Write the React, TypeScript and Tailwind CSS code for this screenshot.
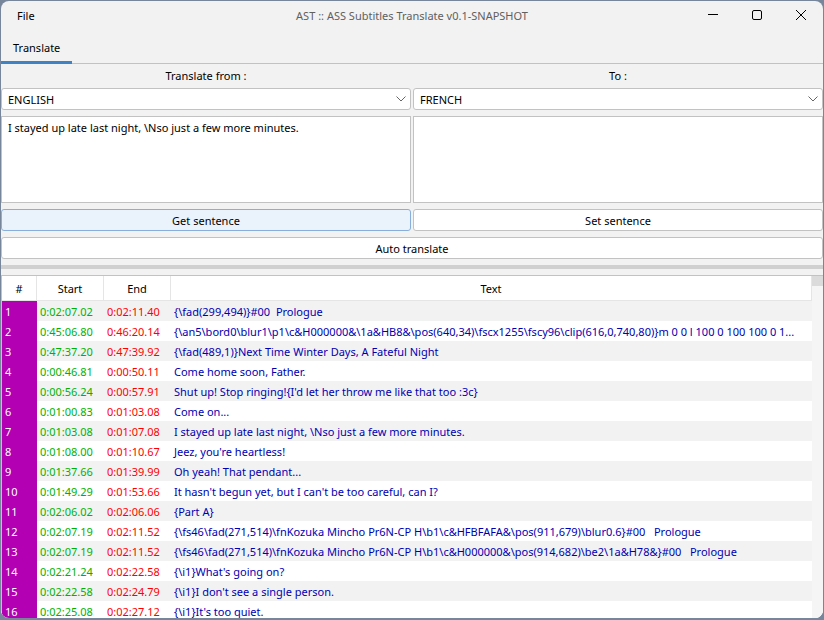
import { useState } from "react";

type Subtitle = { start: string; end: string; text: string };

const subtitles: Subtitle[] = [
  { start: "0:02:07.02", end: "0:02:11.40", text: "{\\fad(299,494)}#00  Prologue" },
  {
    start: "0:45:06.80",
    end: "0:46:20.14",
    text: "{\\an5\\bord0\\blur1\\p1\\c&H000000&\\1a&HB8&\\pos(640,34)\\fscx1255\\fscy96\\clip(616,0,740,80)}m 0 0 l 100 0 100 100 0 1...",
  },
  { start: "0:47:37.20", end: "0:47:39.92", text: "{\\fad(489,1)}Next Time Winter Days, A Fateful Night" },
  { start: "0:00:46.81", end: "0:00:50.11", text: "Come home soon, Father." },
  { start: "0:00:56.24", end: "0:00:57.91", text: "Shut up! Stop ringing!{I'd let her throw me like that too :3c}" },
  { start: "0:01:00.83", end: "0:01:03.08", text: "Come on..." },
  { start: "0:01:03.08", end: "0:01:07.08", text: "I stayed up late last night, \\Nso just a few more minutes." },
  { start: "0:01:08.00", end: "0:01:10.67", text: "Jeez, you're heartless!" },
  { start: "0:01:37.66", end: "0:01:39.99", text: "Oh yeah! That pendant..." },
  { start: "0:01:49.29", end: "0:01:53.66", text: "It hasn't begun yet, but I can't be too careful, can I?" },
  { start: "0:02:06.02", end: "0:02:06.06", text: "{Part A}" },
  {
    start: "0:02:07.19",
    end: "0:02:11.52",
    text: "{\\fs46\\fad(271,514)\\fnKozuka Mincho Pr6N-CP H\\b1\\c&HFBFAFA&\\pos(911,679)\\blur0.6}#00   Prologue",
  },
  {
    start: "0:02:07.19",
    end: "0:02:11.52",
    text: "{\\fs46\\fad(271,514)\\fnKozuka Mincho Pr6N-CP H\\b1\\c&H000000&\\pos(914,682)\\be2\\1a&H78&}#00   Prologue",
  },
  { start: "0:02:21.24", end: "0:02:22.58", text: "{\\i1}What's going on?" },
  { start: "0:02:22.58", end: "0:02:24.79", text: "{\\i1}I don't see a single person." },
  { start: "0:02:25.08", end: "0:02:27.12", text: "{\\i1}It's too quiet." },
];

function TitleBar() {
  return (
    <header className="grid h-[30px] shrink-0 grid-cols-[1fr_auto_1fr] items-center">
      <div>
        <button type="button" className="px-4">File</button>
      </div>
      <h1 className="text-[#606060]">AST :: ASS Subtitles Translate v0.1-SNAPSHOT</h1>
      <div className="flex justify-end self-start">
        <button type="button" aria-label="Minimize" className="flex h-7 w-11 items-center justify-center">
          <svg width="10" height="10" viewBox="0 0 10 10" stroke="#000" fill="none">
            <path d="M0 4.500h10" />
          </svg>
        </button>
        <button type="button" aria-label="Maximize" className="flex h-7 w-11 items-center justify-center">
          <svg width="10" height="10" viewBox="0 0 10 10" stroke="#000" fill="none">
            <rect x="0.5" y="0.5" width="9" height="9" rx="1.5" />
          </svg>
        </button>
        <button type="button" aria-label="Close" className="flex h-7 w-11 items-center justify-center">
          <svg width="10" height="10" viewBox="0 0 10 10" stroke="#000" fill="none" className="overflow-visible">
            <path d="M0 0l10 10M10 0L0 10" />
          </svg>
        </button>
      </div>
    </header>
  );
}

type PaneProps = {
  id: string;
  label: string;
  language: string;
  sentence: string;
  action: string;
  focused?: boolean;
  onChange: (value: string) => void;
  onAction: () => void;
};

function Pane({ id, label, language, sentence, action, focused, onChange, onAction }: PaneProps) {
  return (
    <section className="flex min-w-0 flex-col">
      <label htmlFor={id} className="flex h-6 items-center justify-center">{label}</label>
      <div className="grid items-center">
        <select
          id={id}
          defaultValue={language}
          className="col-start-1 row-start-1 h-[22px] w-full appearance-none rounded-[3px] border border-[#c2c2c2] bg-white px-1.5 pt-0.5"
        >
          <option>ENGLISH</option>
          <option>FRENCH</option>
        </select>
        <svg
          width="10"
          height="6"
          viewBox="0 0 10 6"
          fill="none"
          stroke="#666"
          className="pointer-events-none col-start-1 row-start-1 mr-[5px] justify-self-end"
        >
          <path d="M0.5 0.5L5 5L9.500 0.5" />
        </svg>
      </div>
      <textarea
        aria-label={`${label} sentence`}
        value={sentence}
        onChange={(e) => onChange(e.target.value)}
        className="mt-1.5 block h-[87px] w-full resize-none border border-[#c2c2c2] bg-white px-1.5 py-[3px] outline-none"
      />
      <button
        type="button"
        onClick={onAction}
        className={
          focused
            ? "mt-1.5 h-[22px] rounded-[3px] border border-[#87afda] bg-[#eaf2fc] pt-0.5"
            : "mt-1.5 h-[22px] rounded-[3px] border border-[#c2c2c2] bg-white pt-0.5"
        }
      >
        {action}
      </button>
    </section>
  );
}

function SubtitleTable() {
  return (
    <div className="mt-1.5 flex min-h-0 flex-1 overflow-hidden border-t border-l border-[#c2c2c2] bg-white">
      <div className="min-w-0 flex-1">
        <table className="w-full table-fixed border-separate border-spacing-0">
          <colgroup>
            <col className="w-[35px]" />
            <col className="w-[67px]" />
            <col className="w-[67px]" />
            <col />
          </colgroup>
          <thead>
            <tr className="h-[25px]">
              <th className="border-r border-b border-[#e5e5e5] p-0 pt-0.5 font-normal">#</th>
              <th className="border-r border-b border-[#e5e5e5] p-0 pt-0.5 font-normal">Start</th>
              <th className="border-r border-b border-[#e5e5e5] p-0 pt-0.5 font-normal">End</th>
              <th className="border-r border-b border-[#e5e5e5] p-0 pt-0.5 font-normal">Text</th>
            </tr>
          </thead>
          <tbody>
            {subtitles.map((s, i) => (
              <tr key={i} className="h-5 odd:bg-[#f2f2f2]">
                <td className="bg-[#b200b2] p-0 pt-0.5 pl-[3px] text-white">{i + 1}</td>
                <td className="p-0 pt-0.5 pl-[3px] text-[#00b200]">{s.start}</td>
                <td className="p-0 pt-0.5 pl-[3px] text-[#ff0000]">{s.end}</td>
                <td className="overflow-hidden p-0 px-[3px] pt-0.5 text-ellipsis whitespace-pre text-[#0000b2]">{s.text}</td>
              </tr>
            ))}
          </tbody>
        </table>
      </div>
      <div className="w-[11px] shrink-0 bg-[#f5f5f5]">
        <div className="h-2.5 bg-[#dbdbdb]" />
      </div>
    </div>
  );
}

export default function App() {
  const [source, setSource] = useState("I stayed up late last night, \\Nso just a few more minutes.");
  const [target, setTarget] = useState("");

  return (
    <div className="h-screen bg-[#77869a] px-px pt-px pb-0.5 font-['Noto_Sans','Open_Sans',sans-serif] text-[11px] leading-4 text-black">
      <div className="flex h-full flex-col overflow-hidden rounded-lg bg-[#f2f2f2]">
        <TitleBar />
        <nav role="tablist" className="flex h-[33px] shrink-0 border-b border-[#c2c2c2]">
          <button type="button" role="tab" aria-selected="true" className="-mb-px h-[33px] border-b-3 border-[#3f83c5] px-3 pt-1">
            Translate
          </button>
        </nav>
        <main className="flex min-h-0 flex-1 flex-col">
          <div className="grid shrink-0 grid-cols-2 gap-0.5">
            <Pane
              id="from"
              label="Translate from :"
              language="ENGLISH"
              sentence={source}
              action="Get sentence"
              focused
              onChange={setSource}
              onAction={() => setSource(subtitles[6].text)}
            />
            <Pane
              id="to"
              label="To :"
              language="FRENCH"
              sentence={target}
              action="Set sentence"
              onChange={setTarget}
              onAction={() => setTarget(target)}
            />
          </div>
          <button type="button" className="mt-1.5 h-[22px] shrink-0 rounded-[3px] border border-[#c2c2c2] bg-white pt-0.5">
            Auto translate
          </button>
          <div role="separator" className="mt-1.5 h-1 shrink-0 bg-[#d0d0d0]" />
          <SubtitleTable />
        </main>
      </div>
    </div>
  );
}
